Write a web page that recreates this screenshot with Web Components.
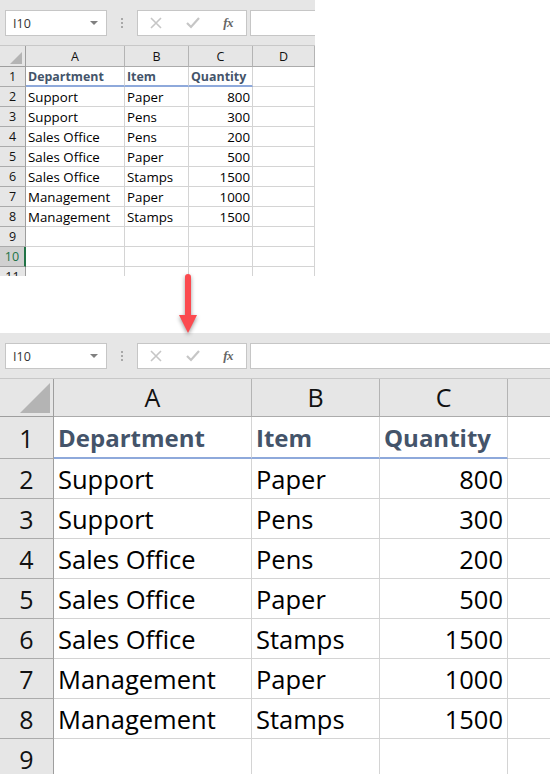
<!DOCTYPE html>
<html><head><meta charset="utf-8">
<style>
html,body{margin:0;padding:0;background:#fff}
body{width:550px;height:774px;overflow:hidden;position:relative;font-family:"Open Sans","Noto Sans",sans-serif}
#gap{height:57px}
</style></head>
<body>
<x-sheet id="s1" variant="small"></x-sheet>
<div id="gap"></div>
<x-sheet id="s2" variant="large"></x-sheet>
<x-arrow></x-arrow>
<script>
class XFormulaBar extends HTMLElement{
  constructor(){super();const s=this.attachShadow({mode:'open'});
  s.innerHTML=`<style>
  :host{display:flex;box-sizing:border-box;height:46px;background:#e6e6e6;padding:10px 0 9px 5px;align-items:stretch;border-bottom:1px solid #c8c8c8;font-family:"Open Sans","Noto Sans",sans-serif}
  .box{box-sizing:border-box;background:#fff;border:1px solid #c6c6c6}
  .name{width:102px;display:flex;align-items:center;justify-content:space-between;padding:0 8px 0 7px;font-size:12.5px;color:#333}
  .caret{width:0;height:0;border-left:4px solid transparent;border-right:4px solid transparent;border-top:4px solid #808080}
  .dots{width:30px;display:flex;flex-direction:column;align-items:center;justify-content:center;gap:2px}
  .dots i{width:2px;height:2px;background:#a8a8a8;display:block}
  .func{width:110px;display:flex;align-items:center;padding:0 12px}
  .func svg{display:block}
  .func b{font:italic 700 13px "Liberation Serif",serif;color:#666;margin-left:auto;letter-spacing:-.5px;margin-right:1px}
  .func .x{margin-right:24px;margin-left:0}
  .formula{flex:1;margin-left:3px;border-right:0}
  </style>
  <div class="box name"><span>I10</span><span class="caret"></span></div>
  <div class="dots"><i></i><i></i><i></i></div>
  <div class="box func">
   <svg class="x" width="12" height="12" viewBox="0 0 12 12" fill="none" stroke="#c6c6c6" stroke-width="1.6"><path d="M1 1l10 10M11 1L1 11"/></svg>
   <svg width="14" height="12" viewBox="0 0 14 12" fill="none" stroke="#c6c6c6" stroke-width="2.2"><path d="M1 6l4 4 8-9"/></svg>
   <b>fx</b>
  </div>
  <div class="box formula"></div>`;}
}
customElements.define('x-formula-bar',XFormulaBar);

const DATA=[
 ['Support','Paper','800'],['Support','Pens','300'],['Sales Office','Pens','200'],['Sales Office','Paper','500'],
 ['Sales Office','Stamps','1500'],['Management','Paper','1000'],['Management','Stamps','1500']];

class XGrid extends HTMLElement{
  constructor(){super();this.attachShadow({mode:'open'});}
  connectedCallback(){
    const large=this.getAttribute('variant')==='large';
    const cols=large?[54,198,128,128,42]:[26,99,64,64,62];
    const letters=large?['A','B','C','']:['A','B','C','D'];
    const rowsN=large?9:11;
    const hh=large?38:21, r1=large?42:20, rh=large?40:20;
    let h=`<style>
    :host{display:block;overflow:hidden;background:#fff;color:#000;font-family:"Open Sans","Noto Sans",sans-serif;height:${large?395:230}px}
    .g{display:grid;grid-template-columns:${cols.map(c=>c+'px').join(' ')};grid-template-rows:${hh}px ${r1}px repeat(${rowsN-1},${rh}px)}
    .c{box-sizing:border-box;border-right:1px solid #d4d4d4;border-bottom:1px solid #d4d4d4;display:flex;align-items:center;white-space:nowrap;overflow:visible;font-size:${large?25.5:13.3}px;padding:1px ${large?4:2}px 0}
    .c.n{justify-content:flex-end}
    .c.hd{font-weight:700;color:#44546a;border-bottom:2px solid #8ea9db;font-size:${large?24:12.4}px;padding-top:1px}
    .ch,.rh,.cn{box-sizing:border-box;background:#e6e6e6;display:flex;align-items:center;justify-content:center;border-right:1px solid #ababab;border-bottom:1px solid #ababab;font-size:${large?25:12.5}px;color:#111}
    .ch{border-right-color:#b4b4b4;padding-bottom:${large?2:0}px}
    .rh{border-right:1px solid #9e9e9e;border-bottom-color:#ababab}
    .rh.sel{background:#d0d0d0;color:#217346;border-right:2px solid #217346;border-bottom-color:#9e9e9e}
    .ch.blank{border-right:0}
    .cn{position:relative;align-items:flex-end;justify-content:flex-end;padding:0 3px ${large?3:2}px 0;border-bottom-color:#9e9e9e;border-right-color:#9e9e9e}
    .cn svg{display:block}
    </style><div class="g">`;
    h+=`<div class="cn"><svg width="${large?30:12}" height="${large?30:12}" viewBox="0 0 10 10"><path d="M10 0V10H0Z" fill="#b4b4b4"/></svg></div>`;
    letters.forEach(l=>h+=`<div class="ch${l?'':' blank'}">${l}</div>`);
    for(let r=1;r<=rowsN;r++){
      const sel=!large&&r===10;
      h+=`<div class="rh${sel?' sel':''}">${r}</div>`;
      if(r===1){
        h+=`<div class="c hd">Department</div><div class="c hd">Item</div><div class="c hd">Quantity</div><div class="c" style="${large?'border-right:0':''}"></div>`;
      }else{
        const d=DATA[r-2]||['','',''];
        h+=`<div class="c">${d[0]}</div><div class="c">${d[1]}</div><div class="c n">${d[2]}</div><div class="c" style="${large?'border-right:0':''}"></div>`;
      }
    }
    h+='</div>';
    this.shadowRoot.innerHTML=h;
  }
}
customElements.define('x-grid',XGrid);

class XSheet extends HTMLElement{
  constructor(){super();this.attachShadow({mode:'open'});}
  connectedCallback(){
    const v=this.getAttribute('variant');
    this.shadowRoot.innerHTML=`<style>:host{display:block;width:${v==='large'?550:315}px;height:${v==='large'?441:276}px;overflow:hidden}</style>
    <x-formula-bar></x-formula-bar><x-grid variant="${v}"></x-grid>`;
  }
}
customElements.define('x-sheet',XSheet);

class XArrow extends HTMLElement{
  constructor(){super();this.attachShadow({mode:'open'}).innerHTML=`<style>
  :host{display:block;position:absolute;left:174px;top:270px;width:28px;height:70px}
  svg{display:block;overflow:visible;filter:drop-shadow(0 2px 2px rgba(0,0,0,.4))}
  </style><svg width="28" height="70" viewBox="0 0 28 70"><path d="M11 7a3 3 0 0 1 6 0V45H23L14 63 5 45H11Z" fill="#fb4a4f"/></svg>`;}
}
customElements.define('x-arrow',XArrow);
</script>
</body></html>
